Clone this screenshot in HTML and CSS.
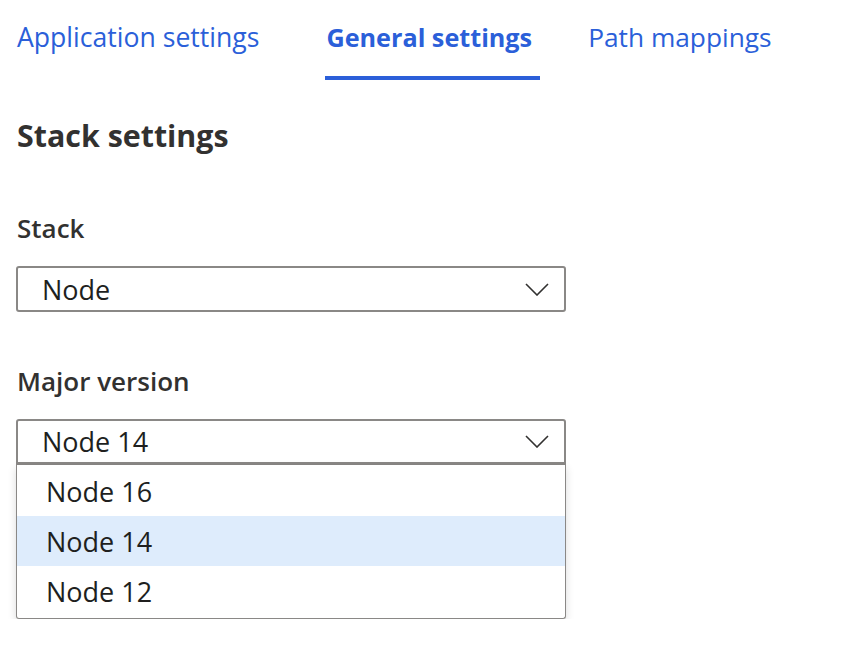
FILE: index.html
```html
<!DOCTYPE html>
<html lang="en">
<head>
<meta charset="utf-8">
<title>General settings</title>
<link rel="stylesheet" href="styles.css">
</head>
<body>
<div class="page">
  <nav class="tabs">
    <a class="tab">Application settings</a>
    <a class="tab active">General settings</a>
    <a class="tab">Path mappings</a>
  </nav>
  <h2 class="section-title">Stack settings</h2>
  <div class="field">
    <label class="label">Stack</label>
    <div class="dropdown">
      <span class="dropdown-text">Node</span>
      <svg class="chevron" width="24" height="13" viewBox="0 0 24 13"><path d="M1 1 L12 12 L23 1" fill="none" stroke="#323130" stroke-width="1.6"/></svg>
    </div>
  </div>
  <div class="field field-open">
    <label class="label">Major version</label>
    <div class="dropdown open">
      <span class="dropdown-text">Node 14</span>
      <svg class="chevron" width="24" height="13" viewBox="0 0 24 13"><path d="M1 1 L12 12 L23 1" fill="none" stroke="#323130" stroke-width="1.6"/></svg>
    </div>
    <ul class="menu">
      <li class="option">Node 16</li>
      <li class="option selected">Node 14</li>
      <li class="option">Node 12</li>
    </ul>
  </div>
</div>
</body>
</html>
```
FILE: styles.css
```css
html, body {
  margin: 0;
  padding: 0;
  background: #ffffff;
}
body {
  font-family: "Open Sans", "Noto Sans", sans-serif;
  color: #323130;
}
.page {
  padding: 0 0 0 17px;
}
.tabs {
  display: flex;
  height: 80px;
  align-items: stretch;
  white-space: nowrap;
}
.tab {
  color: #2b5fd9;
  font-size: 26.6px;
  line-height: 1;
  padding-top: 24px;
  box-sizing: border-box;
  height: 80px;
  border-bottom: 4px solid transparent;
  margin-right: 66px;
}
.tab:last-child {
  font-size: 26.3px;
  margin-right: 0;
}
.tab.active {
  font-size: 25.2px;
  padding-top: 25px;
  font-weight: 700;
  border-bottom-color: #2b5fd9;
  padding-left: 1px;
  padding-right: 8px;
  margin-right: 48px;
}
.section-title {
  margin: 38px 0 0 0;
  font-size: 30.4px;
  font-weight: 700;
  line-height: 36px;
}
.field {
  width: 549px;
  margin-top: 59px;
}
.field-open {
  margin-top: 54px;
}
.label {
  display: block;
  font-size: 26px;
  font-weight: 600;
  line-height: 30px;
  margin-bottom: 23px;
}
.dropdown {
  margin-left: -1px;
  height: 46px;
  box-sizing: border-box;
  border: 2px solid #8a8886;
  border-radius: 3px;
  display: flex;
  align-items: center;
  justify-content: space-between;
  padding: 0 15px 0 24px;
}
.dropdown.open {
  border-bottom-width: 3px;
  border-radius: 3px 3px 0 0;
}
.dropdown-text {
  font-size: 27px;
  color: #201f1e;
}
.chevron {
  display: block;
}
.menu {
  margin: 0 0 0 -1px;
  padding: 1px 0 2px;
  list-style: none;
  background: #ffffff;
  border: 1px solid #8a8886;
  border-top: none;
  border-radius: 0 0 3px 3px;
  box-shadow: 0 3px 8px rgba(0,0,0,0.15);
}
.option {
  height: 50px;
  display: flex;
  align-items: center;
  padding-left: 29px;
  font-size: 27px;
  color: #201f1e;
}
.option.selected {
  background: #deecfc;
}
```
